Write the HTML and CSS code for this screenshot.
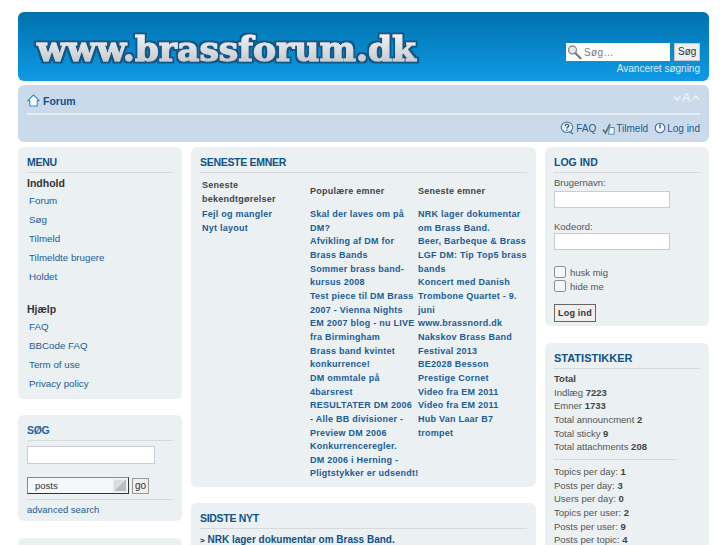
FILE: index.html
```html
<!doctype html>
<html lang="da">
<head>
    <meta charset="utf-8"/>
    <title>www.brassforum.dk</title>
    <link rel="stylesheet" href="styles.css">
</head>
<body>
<div id="wrap">

    <!-- top banner -->
    <div class="header">
        <svg class="logo" width="400" height="50" viewBox="0 0 400 50">
            <defs>
                <linearGradient id="logofill" x1="0" y1="0" x2="0" y2="1">
                    <stop offset="0" stop-color="#f8f9fa"/>
                    <stop offset="1" stop-color="#bcc2c8"/>
                </linearGradient>
                <filter id="logoedge" x="-5%" y="-30%" width="110%" height="160%">
                    <feMorphology in="SourceAlpha" operator="dilate" radius="1.6" result="fat"/>
                    <feFlood flood-color="#0d5a8a"/>
                    <feComposite in2="fat" operator="in"/>
                    <feGaussianBlur stdDeviation="0.5" result="edge"/>
                    <feMerge>
                        <feMergeNode in="edge"/>
                        <feMergeNode in="SourceGraphic"/>
                    </feMerge>
                </filter>
            </defs>
            <text x="4" y="38" textLength="379" lengthAdjust="spacingAndGlyphs" class="logotext">www.brassforum.dk</text>
        </svg>
        <div class="headsearch">
            <div class="searchrow">
                <div class="searchfield">
                    <svg width="15" height="16" viewBox="0 0 15 16">
                        <circle cx="5.5" cy="6" r="4" fill="#e8ecef" stroke="#8b8f92" stroke-width="1.4"/>
                        <path d="M8.5 9.3l5 5" stroke="#77797b" stroke-width="2.2" stroke-linecap="round"/>
                    </svg>
                    <span>Søg…</span>
                </div>
                <span class="btn">Søg</span>
            </div>
            <a class="advlink">Avanceret søgning</a>
        </div>
    </div>

    <!-- breadcrumb bar -->
    <div class="navbar">
        <div class="navtop">
            <a class="crumb">
                <svg width="13" height="13" viewBox="0 0 13 13">
                    <path d="M6.5 1L.8 6.6h2v5.4h7.4V6.6h2z" fill="#fff" stroke="#2f8fc4" stroke-width="1.1" stroke-linejoin="round"/>
                </svg>
                Forum
            </a>
            <div class="fontsize">
                <svg width="27" height="10" viewBox="0 0 27 10">
                    <path d="M1 3.5l3.2 3.5 3.2-3.5M19.6 6.5l3.2-3.5 3.2 3.5" fill="none" stroke="#f0f5fa" stroke-width="1.2"/>
                </svg>
                <span>A</span>
            </div>
        </div>
        <div class="navlinks">
            <a>
                <svg width="15" height="14" viewBox="0 0 15 14">
                    <ellipse cx="7" cy="6.3" rx="5.8" ry="5.2" fill="#e4eef6" stroke="#3f87b5" stroke-width="1.2"/>
                    <path d="M10 10.5l3 2.6" stroke="#3f87b5" stroke-width="1.4"/>
                    <path d="M5.3 5c0-2.3 3.5-2.3 3.5-.2 0 1.3-1.8 1.3-1.8 2.6M7 8.6v1.2" fill="none" stroke="#445" stroke-width="1.2"/>
                </svg>
                FAQ
            </a>
            <a>
                <svg width="13" height="13" viewBox="0 0 13 13">
                    <path d="M1 7.5l2.5 3.5L8 2" fill="none" stroke="#6b7478" stroke-width="1.8"/>
                    <path d="M7.5 5.5h4.7v6.7H6.5z" fill="#eef4f9" stroke="#4a8dba"/>
                </svg>
                Tilmeld
            </a>
            <a>
                <svg width="12" height="12" viewBox="0 0 12 12">
                    <circle cx="6" cy="6" r="4.8" fill="#eef4f9" stroke="#3d6f94" stroke-width="1.1"/>
                    <path d="M6 2.2v4" stroke="#3d6f94" stroke-width="1.5"/>
                </svg>
                Log ind
            </a>
        </div>
    </div>

    <div class="columns">

        <div class="col side">
            <div class="panel menupanel">
                <h3>MENU</h3>
                <h4>Indhold</h4>
                <ul class="menu">
                    <li>Forum</li>
                    <li>Søg</li>
                    <li>Tilmeld</li>
                    <li>Tilmeldte brugere</li>
                    <li>Holdet</li>
                </ul>
                <h4 class="second">Hjælp</h4>
                <ul class="menu">
                    <li>FAQ</li>
                    <li>BBCode FAQ</li>
                    <li>Term of use</li>
                    <li>Privacy policy</li>
                </ul>
            </div>

            <div class="panel searchpanel">
                <h3 class="plain">SØG</h3>
                <div class="input wide"></div>
                <div class="selectrow">
                    <div class="select">
                        <span>posts</span>
                        <i class="arrow"></i>
                    </div>
                    <span class="btn go">go</span>
                </div>
                <a class="advanced">advanced search</a>
            </div>

            <div class="panel"></div>
        </div>

        <div class="col main">
            <div class="panel toppanel">
                <h3>SENESTE EMNER</h3>
                <div class="topics">
                    <div class="topiccol">
                        <div class="topichead">Seneste bekendtgørelser</div>
                        <a>Fejl og mangler</a>
                        <a>Nyt layout</a>
                    </div>
                    <div class="topiccol">
                        <div class="topichead mid">Populære emner</div>
                        <a>Skal der laves om på DM?</a>
                        <a>Afvikling af DM for Brass Bands</a>
                        <a>Sommer brass band-kursus 2008</a>
                        <a>Test piece til DM Brass 2007 - Vienna Nights</a>
                        <a>EM 2007 blog - nu LIVE fra Birmingham</a>
                        <a>Brass band kvintet konkurrence!</a>
                        <a>DM ommtale på 4barsrest</a>
                        <a class="nowrap">RESULTATER DM 2006<br>- Alle BB divisioner -<br>Preview DM 2006</a>
                        <a>Konkurrenceregler.</a>
                        <a class="nowrap">DM 2006 i Herning -<br>Pligtstykker er udsendt!</a>
                    </div>
                    <div class="topiccol">
                        <div class="topichead mid">Seneste emner</div>
                        <a>NRK lager dokumentar om Brass Band.</a>
                        <a>Beer, Barbeque &amp; Brass</a>
                        <a>LGF DM: Tip Top5 brass bands</a>
                        <a>Koncert med Danish Trombone Quartet - 9. juni</a>
                        <a>www.brassnord.dk</a>
                        <a>Nakskov Brass Band Festival 2013</a>
                        <a>BE2028 Besson Prestige Cornet</a>
                        <a>Video fra EM 2011</a>
                        <a>Video fra EM 2011</a>
                        <a>Hub Van Laar B7 trompet</a>
                    </div>
                </div>
            </div>

            <div class="panel newspanel">
                <h3>SIDSTE NYT</h3>
                <div class="newsitem"><i class="bullet">&gt;</i> NRK lager dokumentar om Brass Band.</div>
            </div>
        </div>

        <div class="col side">
            <div class="panel loginpanel">
                <h3>LOG IND</h3>
                <label>Brugernavn:</label>
                <div class="input"></div>
                <label class="second">Kodeord:</label>
                <div class="input"></div>
                <div class="check first"><i></i>husk mig</div>
                <div class="check"><i></i>hide me</div>
                <span class="btn login">Log ind</span>
            </div>

            <div class="panel statspanel">
                <h3>STATISTIKKER</h3>
                <div class="stat"><b>Total</b></div>
                <div class="stat">Indlæg <b>7223</b></div>
                <div class="stat">Emner <b>1733</b></div>
                <div class="stat">Total announcment <b>2</b></div>
                <div class="stat">Total sticky <b>9</b></div>
                <div class="stat">Total attachments <b>208</b></div>
                <hr>
                <div class="stat">Topics per day: <b>1</b></div>
                <div class="stat">Posts per day: <b>3</b></div>
                <div class="stat">Users per day: <b>0</b></div>
                <div class="stat">Topics per user: <b>2</b></div>
                <div class="stat">Posts per user: <b>9</b></div>
                <div class="stat">Posts per topic: <b>4</b></div>
            </div>
        </div>

    </div>
</div>
</body>
</html>
```

FILE: styles.css
```css
html, body {
    margin: 0;
    padding: 0;
    height: 545px;
    overflow: hidden;
    background: #fff;
}

body, ul, li, h3, h4 {
    margin: 0;
    padding: 0;
    list-style: none;
}

body {
    font-family: "Liberation Sans", Arial, sans-serif;
    font-size: 10px;
    color: #333;
}

#wrap {
    padding: 12px 18px 0;
}

/* banner */
.header {
    height: 69px;
    border-radius: 6px;
    background: linear-gradient(#0072ae, #0f9ae4);
    display: flex;
    justify-content: space-between;
    align-items: flex-start;
}

.logo {
    margin: 11px 0 0 15px;
    overflow: visible;
}

.logotext {
    font-family: "DejaVu Serif", serif;
    font-weight: bold;
    font-size: 33px;
    fill: url(#logofill);
    stroke: url(#logofill);
    stroke-width: 1px;
    filter: url(#logoedge);
}

.headsearch {
    margin: 31px 9px 0 0;
    display: flex;
    flex-direction: column;
    align-items: flex-end;
}

.searchrow {
    display: flex;
    gap: 4px;
}

.searchfield {
    width: 103px;
    height: 18px;
    background: #fff;
    display: flex;
    align-items: center;
    gap: 2px;
    padding-left: 1px;
    color: #777;
    font-size: 10px;
    letter-spacing: 0.4px;
}

.btn {
    display: inline-block;
    background: #efefef;
    border: 1px solid #c4c8cb;
    color: #333;
    font-size: 10px;
    line-height: 14px;
    padding: 0 3px;
}

.searchrow .btn {
    width: 18px;
    height: 14px;
    line-height: 14px;
    padding: 1px 3px;
    text-align: center;
}

.advlink {
    margin-top: 2px;
    color: #dcecf8;
    font-size: 10px;
}

/* breadcrumb bar */
.navbar {
    margin-top: 4px;
    height: 57px;
    box-sizing: border-box;
    padding: 0 9px;
    border-radius: 6px;
    background: #cadaea;
}

.navtop {
    height: 28px;
    border-bottom: 2px solid #e6eef5;
    display: flex;
    justify-content: space-between;
    align-items: center;
}

.crumb {
    display: flex;
    align-items: center;
    gap: 3px;
    margin-top: 3px;
    color: #105289;
    font-size: 10.5px;
    font-weight: bold;
}

.fontsize {
    display: flex;
    align-items: center;
    position: relative;
    margin-top: -3px;
    color: #f0f5fa;
    font-size: 13px;
}

.fontsize span {
    position: absolute;
    left: 9px;
}

.navlinks {
    display: flex;
    justify-content: flex-end;
    gap: 6px;
    padding-top: 6px;
}

.navlinks a {
    display: flex;
    align-items: center;
    gap: 1px;
    color: #1c5c94;
    font-size: 10px;
}

/* three columns */
.columns {
    margin-top: 5px;
    display: grid;
    grid-template-columns: 164px 345px 164px;
    gap: 9px;
    align-items: start;
}

.col {
    display: flex;
    flex-direction: column;
    gap: 16px;
}

.panel {
    box-sizing: border-box;
    padding: 9px 9px 8px;
    background: #ebf0f3;
    border-radius: 6px;
    min-height: 30px;
}

h3 {
    font-size: 10.5px;
    line-height: 12px;
    letter-spacing: -0.3px;
    color: #105289;
    font-weight: bold;
    padding-bottom: 4px;
    border-bottom: 1px solid #d6dadd;
}

h4 {
    font-size: 10.5px;
    line-height: 13px;
    color: #333;
    margin: 4px 0 1px;
}

h4.second {
    margin: 17px 0 1px;
}

.menu li {
    height: 19px;
    line-height: 19px;
    padding-left: 2px;
    color: #1c5c94;
    font-size: 9.75px;
}

.menupanel {
    height: 252px;
}

/* search box */
.searchpanel {
    height: 106px;
    margin-bottom: 1px;
}

.plain {
    color: #1f639b;
}

.input {
    width: 114px;
    height: 15px;
    background: #fff;
    border: 1px solid #c7cdd2;
}

.wide {
    width: 126px;
    height: 16px;
    margin-top: 5px;
}

.selectrow {
    display: flex;
    align-items: center;
    gap: 3px;
    margin-top: 13px;
    padding-bottom: 5px;
    border-bottom: 1px solid #d6dadd;
}

.select {
    width: 99px;
    height: 15px;
    background: #f6f7f8;
    border: 1px solid #666;
    border-color: #888 #333 #333 #888;
    display: flex;
    align-items: center;
    justify-content: space-between;
    padding-right: 1px;
    color: #333;
    font-size: 9.5px;
}

.select span {
    padding-left: 7px;
}

.arrow {
    display: block;
    width: 14px;
    height: 13px;
    background: linear-gradient(135deg, #d8dcdf 50%, #b9bdc0 50%);
    border: 1px solid #e8eaec;
    box-sizing: border-box;
}

.btn.go {
    padding: 0 2px;
    border-color: #999;
    font-size: 10px;
}

.advanced {
    display: block;
    margin-top: 4px;
    color: #1c5c94;
    font-size: 9.5px;
}

/* latest topics */
.toppanel {
    height: 340px;
}

.topics {
    display: grid;
    grid-template-columns: 108px 108px 1fr;
    padding-left: 2px;
    margin-top: 6px;
}

.topiccol a {
    display: block;
    color: #1c5c94;
    font-size: 9px;
    font-weight: bold;
    line-height: 13.65px;
    letter-spacing: 0.25px;
}

.topiccol a.nowrap {
    white-space: nowrap;
}

.topichead {
    color: #444;
    font-size: 9px;
    font-weight: bold;
    line-height: 13.65px;
    letter-spacing: 0.25px;
    height: 27px;
    margin-bottom: 2px;
    width: 90px;
}

.topichead.mid {
    width: auto;
    line-height: 25px;
}

.newsitem {
    margin-top: 5px;
    color: #105289;
    font-size: 10px;
    font-weight: bold;
}

.bullet {
    font-style: normal;
    font-size: 8px;
    color: #222;
}

/* login */
.loginpanel {
    height: 179px;
    margin-bottom: 1px;
}

.loginpanel h3 {
    letter-spacing: 0;
}

label {
    display: block;
    margin: 3px 0 2px;
    line-height: 13px;
    color: #555;
    font-size: 9.5px;
}

label.second {
    margin: 12px 0 0;
}

.check {
    display: flex;
    align-items: center;
    gap: 4px;
    height: 14px;
    color: #555;
    font-size: 9.5px;
}

.check.first {
    margin-top: 15px;
}

.check i {
    display: block;
    width: 10px;
    height: 10px;
    border: 1px solid #8d9295;
    border-radius: 2px;
    background: #f4f5f6;
}

.btn.login {
    margin-top: 11px;
    padding: 1px 3px;
    border: 1px solid #666;
    font-weight: bold;
    font-size: 9px;
    letter-spacing: 0.2px;
}

/* statistics */
.statspanel {
    height: 230px;
}

.stat {
    line-height: 13.65px;
    color: #555;
    font-size: 9.5px;
}

.stat b {
    color: #444;
}

.statspanel h3 {
    margin-bottom: 3px;
    font-size: 11px;
    letter-spacing: 0;
}

hr {
    border: 0;
    width: 123px;
    margin: 5px 0;
    border-top: 1px solid #d6dadd;
}
```
